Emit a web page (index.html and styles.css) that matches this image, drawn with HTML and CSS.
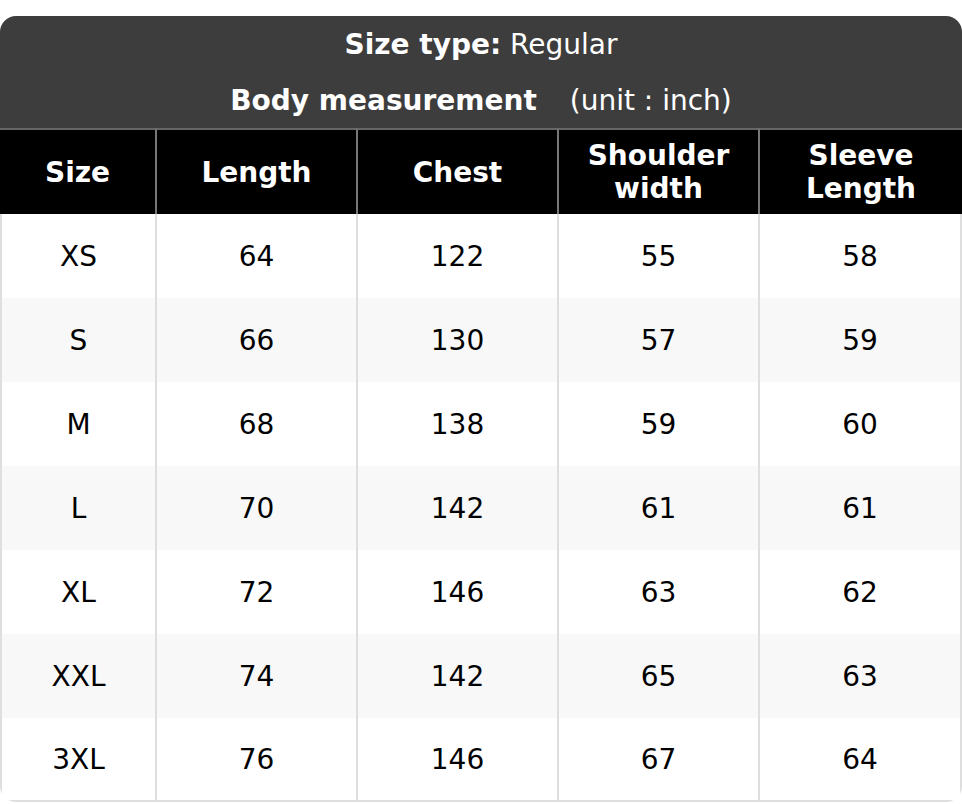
FILE: index.html
```html
<!DOCTYPE html>
<html>
<head>
<meta charset="utf-8">
<link rel="stylesheet" href="styles.css">
</head>
<body>
<div class="card">
  <div class="title">
    <div class="title-line"><b>Size type:</b>&nbsp;Regular</div>
    <div class="title-line"><b>Body measurement</b><span class="unit">(unit : inch)</span></div>
  </div>
  <div class="grid">
    <div class="th first">Size</div>
    <div class="th">Length</div>
    <div class="th">Chest</div>
    <div class="th">Shoulder<br>width</div>
    <div class="th">Sleeve<br>Length</div>

    <div class="td first">XS</div><div class="td">64</div><div class="td">122</div><div class="td">55</div><div class="td last">58</div>
    <div class="td first alt">S</div><div class="td alt">66</div><div class="td alt">130</div><div class="td alt">57</div><div class="td last alt">59</div>
    <div class="td first">M</div><div class="td">68</div><div class="td">138</div><div class="td">59</div><div class="td last">60</div>
    <div class="td first alt">L</div><div class="td alt">70</div><div class="td alt">142</div><div class="td alt">61</div><div class="td last alt">61</div>
    <div class="td first">XL</div><div class="td">72</div><div class="td">146</div><div class="td">63</div><div class="td last">62</div>
    <div class="td first alt">XXL</div><div class="td alt">74</div><div class="td alt">142</div><div class="td alt">65</div><div class="td last alt">63</div>
    <div class="td first bottom">3XL</div><div class="td bottom">76</div><div class="td bottom">146</div><div class="td bottom">67</div><div class="td last bottom">64</div>
  </div>
</div>
</body>
</html>
```

FILE: styles.css
```css
html, body {
  margin: 0;
  padding: 0;
  background: #ffffff;
}
body {
  padding-top: 16px;
  font-family: "DejaVu Sans", sans-serif;
  font-size: 28px;
}
.card {
  width: 962px;
  border-radius: 16px;
  overflow: hidden;
}
.title {
  background: #3d3d3d;
  color: #ffffff;
}
.title-line {
  height: 56px;
  display: flex;
  align-items: center;
  justify-content: center;
}
.unit {
  margin-left: 33px;
}
.grid {
  display: grid;
  grid-template-columns: 155px 201px 201px 201px 1fr;
}
.th, .td {
  box-sizing: border-box;
  display: flex;
  align-items: center;
  justify-content: center;
  text-align: center;
}
.th {
  height: 86px;
  background: #000000;
  color: #ffffff;
  font-weight: bold;
  border-top: 2px solid #666666;
  border-left: 2px solid #777777;
  line-height: 33px;
}
.th.first {
  border-left: none;
}
.td {
  height: 84px;
  color: #000000;
  background: #ffffff;
  border-left: 2px solid #dedede;
}
.td.alt {
  background: #f8f8f8;
}
.td.last {
  border-right: 2px solid #dedede;
}
.td.bottom {
  border-bottom: 2px solid #dedede;
}
```
